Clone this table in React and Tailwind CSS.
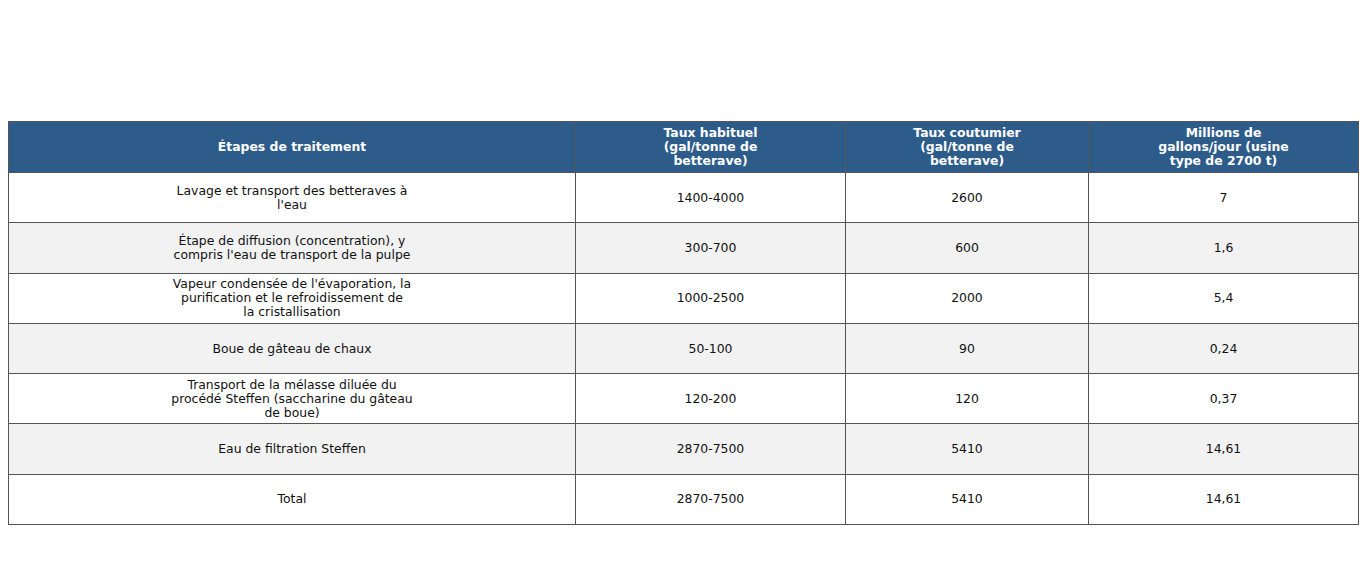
const rows = [
  [["Lavage et transport des betteraves à", "l'eau"], "1400-4000", "2600", "7"],
  [["Étape de diffusion (concentration), y", "compris l'eau de transport de la pulpe"], "300-700", "600", "1,6"],
  [["Vapeur condensée de l'évaporation, la", "purification et le refroidissement de", "la cristallisation"], "1000-2500", "2000", "5,4"],
  [["Boue de gâteau de chaux"], "50-100", "90", "0,24"],
  [["Transport de la mélasse diluée du", "procédé Steffen (saccharine du gâteau", "de boue)"], "120-200", "120", "0,37"],
  [["Eau de filtration Steffen"], "2870-7500", "5410", "14,61"],
  [["Total"], "2870-7500", "5410", "14,61"],
];

const headers = [
  ["Étapes de traitement"],
  ["Taux habituel", "(gal/tonne de", "betterave)"],
  ["Taux coutumier", "(gal/tonne de", "betterave)"],
  ["Millions de", "gallons/jour (usine", "type de 2700 t)"],
];

function Lines({ lines }) {
  return lines.map((l, i) => (
    <span key={i}>
      {i > 0 && <br />}
      {l}
    </span>
  ));
}

export default function App() {
  return (
    <div className="w-[1366px] h-[587px] bg-white pt-[121px] pl-[8px] font-['DejaVu_Sans',sans-serif]">
      <table className="border-collapse table-fixed w-[1350px] text-[12.4px] leading-[14px]">
        <colgroup>
          <col className="w-[567px]" />
          <col className="w-[270px]" />
          <col className="w-[243px]" />
          <col className="w-[270px]" />
        </colgroup>
        <thead>
          <tr className="h-[51px] bg-[#2e5c8a]">
            {headers.map((h, i) => (
              <th key={i} className="border border-[#555] text-white font-bold text-center align-middle p-0">
                <Lines lines={h} />
              </th>
            ))}
          </tr>
        </thead>
        <tbody>
          {rows.map((r, i) => (
            <tr key={i} className={i % 2 === 1 ? "h-[50.3px] bg-[#f2f2f2]" : "h-[50.3px] bg-white"}>
              <td className="border border-[#555] text-center align-middle text-[#111] p-0">
                <Lines lines={r[0]} />
              </td>
              {r.slice(1).map((c, j) => (
                <td key={j} className="border border-[#555] text-center align-middle text-[#111] p-0">
                  {c}
                </td>
              ))}
            </tr>
          ))}
        </tbody>
      </table>
    </div>
  );
}
